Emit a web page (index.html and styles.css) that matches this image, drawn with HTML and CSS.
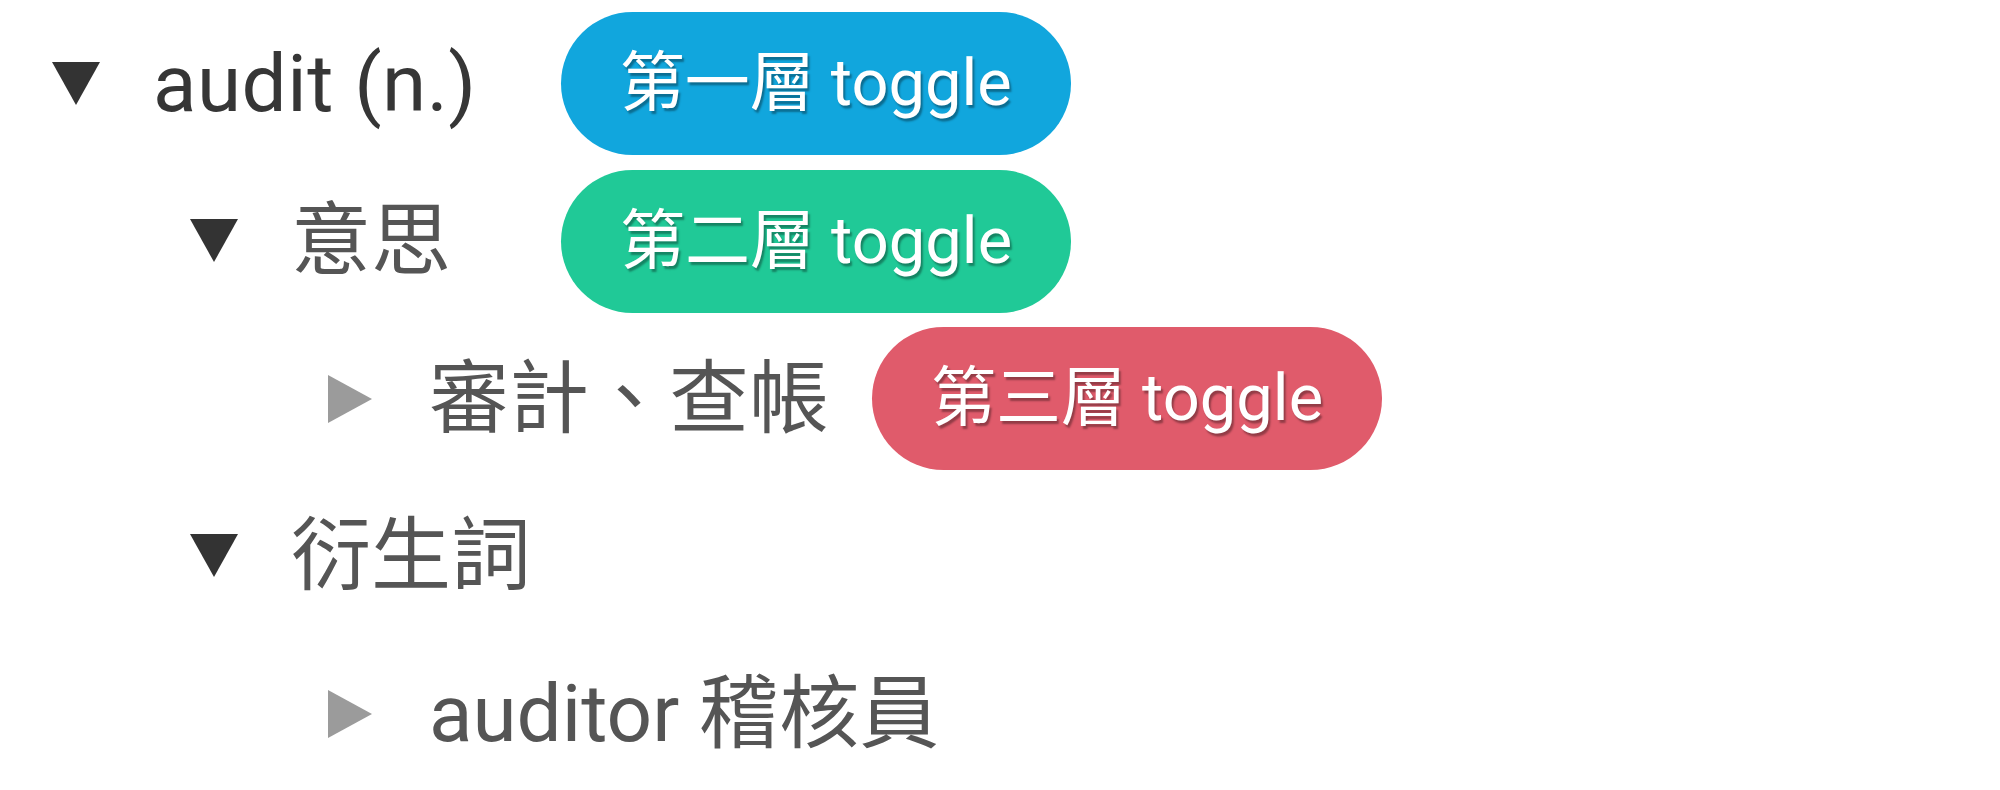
FILE: index.html
```html
<!DOCTYPE html>
<html lang="zh-Hant">
<head>
  <meta charset="UTF-8" />
  <meta name="viewport" content="width=device-width, initial-scale=1.0" />
  <title>audit</title>
  <link rel="stylesheet" href="styles.css">
</head>
<body>
  <ul class="tree">
    <li>
      <div class="node">
        <svg class="caret caret-open" viewBox="0 0 48 44"><polygon points="0,0 48,0 24,43" /></svg>
        <span class="label label-root">audit (n.)</span>
        <button class="pill pill-1">第一層 toggle</button>
      </div>
      <ul>
        <li>
          <div class="node">
            <svg class="caret caret-open" viewBox="0 0 48 44"><polygon points="0,0 48,0 24,43" /></svg>
            <span class="label">意思</span>
            <button class="pill pill-2">第二層 toggle</button>
          </div>
          <ul>
            <li>
              <div class="node">
                <svg class="caret caret-closed" viewBox="0 0 48 48"><polygon points="0,0 44,24 0,48" /></svg>
                <span class="label">審計、查帳</span>
                <button class="pill pill-3">第三層 toggle</button>
              </div>
            </li>
          </ul>
        </li>
        <li>
          <div class="node">
            <svg class="caret caret-open" viewBox="0 0 48 44"><polygon points="0,0 48,0 24,43" /></svg>
            <span class="label">衍生詞</span>
          </div>
          <ul>
            <li>
              <div class="node">
                <svg class="caret caret-closed" viewBox="0 0 48 48"><polygon points="0,0 44,24 0,48" /></svg>
                <span class="label">auditor 稽核員</span>
              </div>
            </li>
          </ul>
        </li>
      </ul>
    </li>
  </ul>
</body>
</html>
```

FILE: styles.css
```css
body {
  margin: 0;
  background: #fff;
  font-family: Roboto, "Noto Sans CJK TC", sans-serif;
}

.tree,
.tree ul {
  list-style: none;
  margin: 0;
  padding: 0;
}

.tree {
  padding: 5px 0 0 52px;
}

.tree ul {
  padding-left: 138px;
}

.node {
  display: flex;
  align-items: center;
  height: 157.5px;
}

.caret {
  flex: none;
  width: 48px;
  margin-right: 53px;
}

.caret-open {
  height: 44px;
  fill: #333;
}

.caret-closed {
  height: 48px;
  fill: #9b9b9b;
}

.label {
  font-size: 80px;
  line-height: 1;
  color: #555;
  white-space: nowrap;
}

.label-root {
  color: #363636;
  letter-spacing: 0.5px;
}

.pill {
  display: inline-flex;
  align-items: center;
  height: 143px;
  padding: 0 59px;
  border: none;
  border-radius: 72px;
  font-family: inherit;
  font-size: 65px;
  line-height: 1;
  color: #fff;
  text-shadow: 2px 3px 2px rgba(0, 0, 0, 0.35);
  white-space: nowrap;
  cursor: pointer;
}

.pill-1 {
  margin-left: 84px;
  background: #11a6dd;
}

.pill-2 {
  margin-left: 110px;
  background: #20c997;
}

.pill-3 {
  margin-left: 43px;
  background: #e05b6b;
}
```
